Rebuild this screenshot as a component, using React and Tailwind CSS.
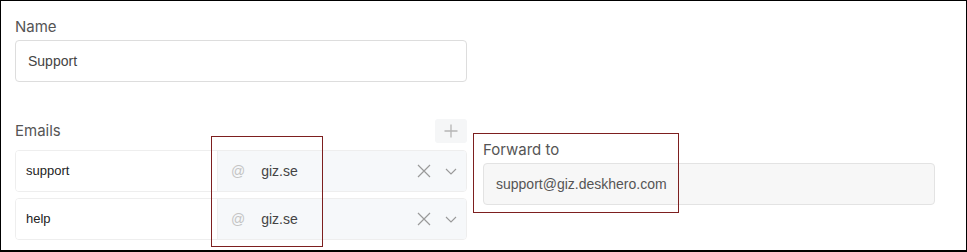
import React from "react";

const inter = { fontFamily: "Inter, 'Noto Sans', sans-serif" };

function XIcon() {
  return (
    <svg width="14" height="14" viewBox="0 0 14 14" fill="none" stroke="#9a9a9a" strokeWidth="1.2">
      <path d="M1 1L13 13M13 1L1 13" />
    </svg>
  );
}

function Chevron() {
  return (
    <svg width="12" height="7" viewBox="0 0 12 7" fill="none" stroke="#9a9a9a" strokeWidth="1.1">
      <path d="M1 1L6 6L11 1" />
    </svg>
  );
}

function PlusIcon() {
  return (
    <svg width="14" height="14" viewBox="0 0 14 14" fill="none" stroke="#b5b5b5" strokeWidth="1.3">
      <path d="M7 0.5V13.5M0.5 7H13.5" />
    </svg>
  );
}

function EmailRow({ local }) {
  return (
    <div className="flex h-[42px] w-full rounded-[4px] border border-[#eeeeee] overflow-hidden">
      <div className="flex w-[201px] items-center bg-white pl-[10px] text-[13px] text-[#222]">
        {local}
      </div>
      <div className="flex flex-1 items-center border-l border-[#eeeeee] bg-[#f6f8fa] pl-[13px] pr-[9px]">
        <span className="text-[14px] text-[#c4c4c4]">@</span>
        <span className="ml-[16px] text-[14px] text-[#444]">giz.se</span>
        <div className="ml-auto flex items-center gap-[14px]">
          <XIcon />
          <Chevron />
        </div>
      </div>
    </div>
  );
}

export default function App() {
  return (
    <div
      className="relative h-[252px] w-[967px] border border-b-2 border-black bg-white"
      style={{ fontFamily: "'Liberation Sans', Arial, sans-serif" }}
    >
      <div className="pl-[14px] pt-[16px]">
        <div className="w-[452px]">
          <div className="text-[15px] leading-5 text-[#555]" style={inter}>
            Name
          </div>
          <div className="mt-[3px] flex h-[42px] items-center rounded-[4px] border border-[#dddddd] bg-white pl-[12px] text-[14px] text-[#444]">
            Support
          </div>
        </div>

        <div className="mt-[37px] flex">
          <div className="w-[452px]">
            <div className="flex h-6 items-center justify-between">
              <span className="text-[15px] leading-5 text-[#555]" style={inter}>
                Emails
              </span>
              <div className="flex h-6 w-[32px] items-center justify-center rounded-[3px] bg-[#f5f6f7]">
                <PlusIcon />
              </div>
            </div>
            <div className="mt-[7px] flex flex-col gap-[6px]">
              <EmailRow local="support" />
              <EmailRow local="help" />
            </div>
          </div>

          <div className="ml-[16px] w-[452px] pt-[21px]">
            <div className="text-[15px] leading-5 text-[#555]" style={inter}>
              Forward to
            </div>
            <div className="mt-[3px] flex h-[42px] items-center rounded-[4px] border border-[#e3e3e3] bg-[#f7f7f7] pl-[12px] text-[14px] text-[#555]">
              support@giz.deskhero.com
            </div>
          </div>
        </div>
      </div>

      <div className="absolute left-[210px] top-[135px] h-[111px] w-[112px] border border-[#7d1f1f]" />
      <div className="absolute left-[472px] top-[132px] h-[80px] w-[206px] border border-[#7d1f1f]" />
    </div>
  );
}
